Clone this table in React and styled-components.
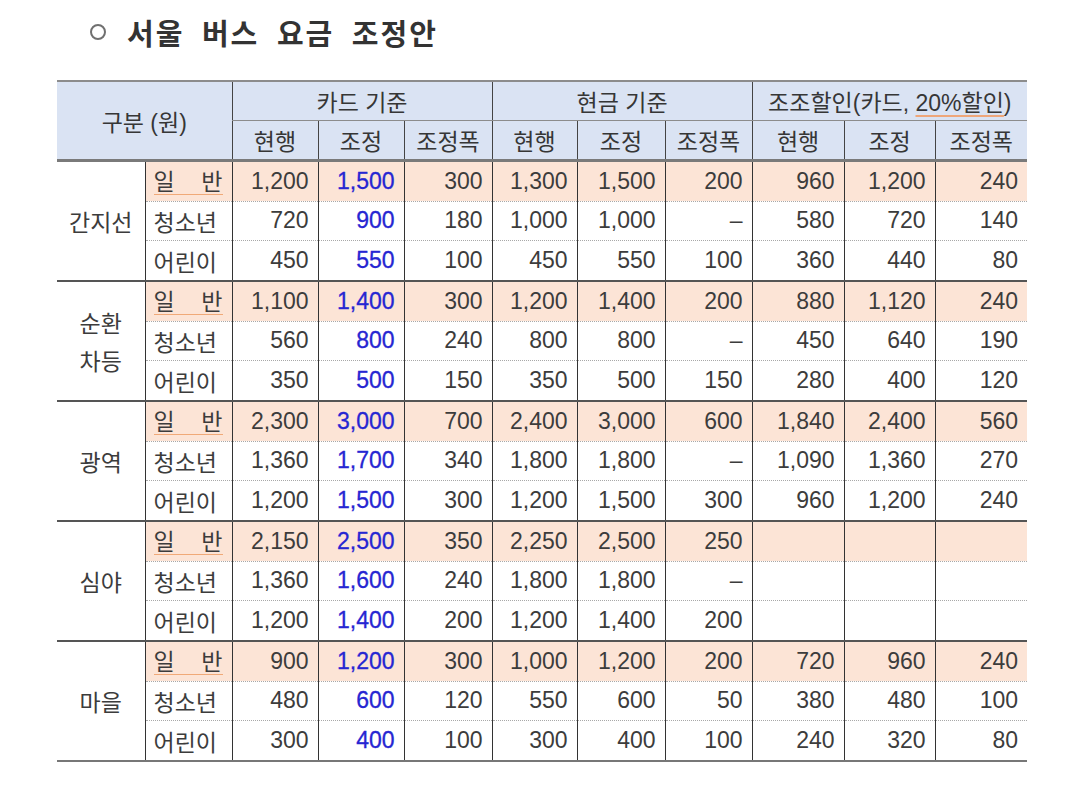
import React from "react";
import styled, { createGlobalStyle } from "styled-components";

const GlobalStyle = createGlobalStyle`
  body {
    margin: 0;
    background: #ffffff;
  }
`;

const FONT = `"Liberation Sans", "Noto Sans CJK KR", sans-serif`;

const Page = styled.div`
  padding: 12px 0 0 57px;
  font-family: ${FONT};
  color: #3a3a3a;
`;

const Title = styled.h1`
  display: flex;
  align-items: center;
  height: 40px;
  margin: 0 0 28px 33px;
  font-family: "Noto Sans CJK KR", sans-serif;
  font-size: 29px;
  font-weight: 700;
  color: #333;
  letter-spacing: 2px;
  word-spacing: 9px;
`;

const Circle = styled.span`
  width: 12px;
  height: 12px;
  margin-right: 21px;
  border: 2px solid #707070;
  border-radius: 50%;
`;

const Table = styled.table`
  width: 970px;
  border-collapse: collapse;
  table-layout: fixed;
`;

const HeadCell = styled.th`
  height: 38px;
  padding: 0;
  background: #dae3f3;
  font-size: 23px;
  font-weight: normal;
  color: #363636;
  text-align: center;
  white-space: nowrap;
  border-left: ${(p) => (p.$noLeft ? "none" : "1px solid #444")};
  border-top: ${(p) => (p.$top ? "2px solid #8c8c8c" : "1px solid #8c8c8c")};
  border-bottom: ${(p) => (p.$bottom ? "3px solid #7a7a7a" : "1px solid #8c8c8c")};
`;

const Underlined = styled.span`
  text-decoration: underline;
  text-decoration-color: #eea67a;
  text-underline-offset: 4px;
`;

const Cell = styled.td`
  height: 38.67px;
  padding: 0 9px 0 0;
  background: ${(p) => (p.$peach ? "#fce4d6" : "#ffffff")};
  font-size: 23px;
  color: ${(p) => (p.$blue ? "#2626d2" : "#3c3c3c")};
  -webkit-text-stroke: ${(p) => (p.$blue ? "0.3px #2626d2" : "0")};
  text-align: right;
  white-space: nowrap;
  border-left: 1px solid #333;
  border-top: ${(p) => (p.$groupStart ? "2px solid #555" : "1px dotted #a8a8a8")};
  border-bottom: ${(p) => (p.$last ? "2px solid #777" : "none")};
`;

const LabelCell = styled(Cell)`
  padding: 0 0 0 8px;
  font-family: "Noto Sans CJK KR", sans-serif;
  font-size: 23px;
  text-align: left;
`;

const CategoryCell = styled.td`
  padding: 0;
  font-family: "Noto Sans CJK KR", sans-serif;
  font-size: 23px;
  line-height: 38px;
  color: #3c3c3c;
  text-align: center;
  border-top: 2px solid #555;
  border-bottom: ${(p) => (p.$last ? "2px solid #777" : "none")};
`;

const Spaced = styled.span`
  display: flex;
  justify-content: space-between;
  width: 69px;
  line-height: 27px;
  border-bottom: 1.5px solid #f0a978;
`;

const widths = [88, 87, 86, 86, 88, 85, 88, 87, 92, 91, 92];

const groups = [
  {
    name: ["간지선"],
    rows: [
      ["일 반", "1,200", "1,500", "300", "1,300", "1,500", "200", "960", "1,200", "240"],
      ["청소년", "720", "900", "180", "1,000", "1,000", "–", "580", "720", "140"],
      ["어린이", "450", "550", "100", "450", "550", "100", "360", "440", "80"],
    ],
  },
  {
    name: ["순환", "차등"],
    rows: [
      ["일 반", "1,100", "1,400", "300", "1,200", "1,400", "200", "880", "1,120", "240"],
      ["청소년", "560", "800", "240", "800", "800", "–", "450", "640", "190"],
      ["어린이", "350", "500", "150", "350", "500", "150", "280", "400", "120"],
    ],
  },
  {
    name: ["광역"],
    rows: [
      ["일 반", "2,300", "3,000", "700", "2,400", "3,000", "600", "1,840", "2,400", "560"],
      ["청소년", "1,360", "1,700", "340", "1,800", "1,800", "–", "1,090", "1,360", "270"],
      ["어린이", "1,200", "1,500", "300", "1,200", "1,500", "300", "960", "1,200", "240"],
    ],
  },
  {
    name: ["심야"],
    rows: [
      ["일 반", "2,150", "2,500", "350", "2,250", "2,500", "250", "", "", ""],
      ["청소년", "1,360", "1,600", "240", "1,800", "1,800", "–", "", "", ""],
      ["어린이", "1,200", "1,400", "200", "1,200", "1,400", "200", "", "", ""],
    ],
  },
  {
    name: ["마을"],
    rows: [
      ["일 반", "900", "1,200", "300", "1,000", "1,200", "200", "720", "960", "240"],
      ["청소년", "480", "600", "120", "550", "600", "50", "380", "480", "100"],
      ["어린이", "300", "400", "100", "300", "400", "100", "240", "320", "80"],
    ],
  },
];

const subHeads = ["현행", "조정", "조정폭", "현행", "조정", "조정폭", "현행", "조정", "조정폭"];

const App = () => {
  return (
    <Page>
      <GlobalStyle />
      <Title>
        <Circle />
        서울 버스 요금 조정안
      </Title>
      <Table>
        <colgroup>
          {widths.map((w, i) => (
            <col key={i} style={{ width: w }} />
          ))}
        </colgroup>
        <thead>
          <tr>
            <HeadCell colSpan={2} rowSpan={2} $noLeft $top $bottom>
              구분 (원)
            </HeadCell>
            <HeadCell colSpan={3} $top>카드 기준</HeadCell>
            <HeadCell colSpan={3} $top>현금 기준</HeadCell>
            <HeadCell colSpan={3} $top>
              조조할인(카드, <Underlined>20%할인</Underlined>)
            </HeadCell>
          </tr>
          <tr>
            {subHeads.map((h, i) => (
              <HeadCell key={i} $bottom>
                {h}
              </HeadCell>
            ))}
          </tr>
        </thead>
        <tbody>
          {groups.map((g, gi) =>
            g.rows.map((row, ri) => {
              const peach = ri === 0;
              const last = gi === groups.length - 1 && ri === 2;
              const [label, ...values] = row;
              return (
                <tr key={`${gi}-${ri}`}>
                  {ri === 0 && (
                    <CategoryCell rowSpan={3} $last={gi === groups.length - 1}>
                      {g.name.map((n) => (
                        <div key={n}>{n}</div>
                      ))}
                    </CategoryCell>
                  )}
                  <LabelCell $peach={peach} $groupStart={ri === 0} $last={last}>
                    {label === "일 반" ? (
                      <Spaced>
                        <span>일</span>
                        <span>반</span>
                      </Spaced>
                    ) : (
                      label
                    )}
                  </LabelCell>
                  {values.map((v, vi) => (
                    <Cell
                      key={vi}
                      $peach={peach}
                      $blue={vi === 1}
                      $groupStart={ri === 0}
                      $last={last}
                    >
                      {v}
                    </Cell>
                  ))}
                </tr>
              );
            })
          )}
        </tbody>
      </Table>
    </Page>
  );
};

export default App;
